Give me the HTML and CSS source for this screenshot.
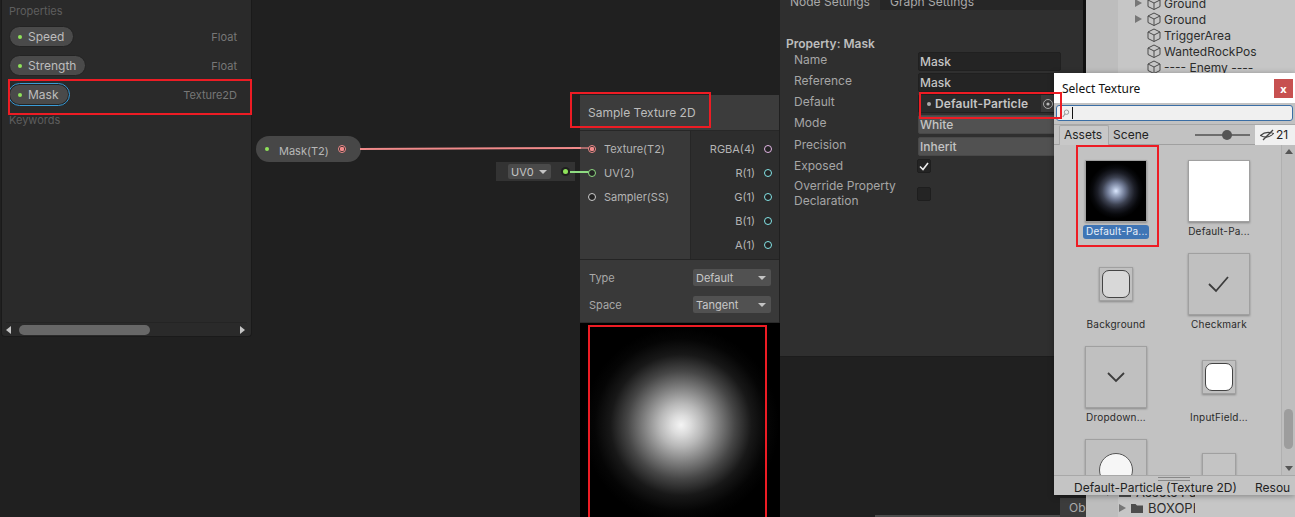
FILE: index.html
```html
<!DOCTYPE html>
<html lang="en">
<head>
    <meta charset="UTF-8">
    <title>Shader Graph - Select Texture</title>
    <link rel="stylesheet" href="styles.css">
</head>
<body>
    <svg width="0" height="0" class="defs">
        <symbol id="cube" viewBox="0 0 14 14">
            <path d="M7 1 L13 4 V10.5 L7 13.5 L1 10.5 V4 Z M1 4 L7 7 L13 4 M7 7 V13.5" fill="none" stroke="#4a4a4a" stroke-width="1"/>
        </symbol>
    </svg>

    <!-- blackboard -->
    <div class="blackboard">
        <div class="bb-title">Properties</div>
        <div class="bb-row"><span class="pill"><i class="dot"></i>Speed</span><span class="bb-type">Float</span></div>
        <div class="bb-row"><span class="pill"><i class="dot"></i>Strength</span><span class="bb-type">Float</span></div>
        <div class="bb-row"><span class="pill pill-selected"><i class="dot"></i>Mask</span><span class="bb-type">Texture2D</span></div>
        <div class="bb-title bb-keywords">Keywords</div>
        <div class="bb-scroll">
            <span class="arrow-left"></span>
            <span class="bb-thumb"></span>
            <span class="arrow-right"></span>
        </div>
    </div>

    <!-- mask property node -->
    <div class="prop-node">
        <i class="dot"></i>
        <span class="prop-label">Mask(T2)</span>
        <i class="port port-tex-on"></i>
    </div>

    <!-- uv input -->
    <div class="uv-input">
        <span class="uv-select">UV0<span class="caret"></span></span>
        <i class="uv-dot"></i>
    </div>

    <!-- sample texture node -->
    <div class="node">
        <div class="node-title">Sample Texture 2D</div>
        <div class="node-ports">
            <div class="ports-in">
                <div class="port-row"><i class="port port-tex-on"></i>Texture(T2)</div>
                <div class="port-row"><i class="port port-uv"></i>UV(2)</div>
                <div class="port-row"><i class="port port-ss"></i>Sampler(SS)</div>
            </div>
            <div class="ports-out">
                <div class="port-row">RGBA(4)<i class="port port-rgba"></i></div>
                <div class="port-row">R(1)<i class="port port-float"></i></div>
                <div class="port-row">G(1)<i class="port port-float"></i></div>
                <div class="port-row">B(1)<i class="port port-float"></i></div>
                <div class="port-row">A(1)<i class="port port-float"></i></div>
            </div>
        </div>
        <div class="node-controls">
            <div class="control-row"><span>Type</span><span class="node-select">Default<span class="caret"></span></span></div>
            <div class="control-row"><span>Space</span><span class="node-select">Tangent<span class="caret"></span></span></div>
        </div>
        <div class="node-preview"><div class="preview-glow"></div></div>
    </div>

    <!-- wires -->
    <svg class="wires" width="1295" height="517">
        <line x1="360" y1="149" x2="581" y2="148" stroke="#f08a8a" stroke-width="2"/>
        <line x1="581" y1="148" x2="589" y2="148" stroke="#a86a6a" stroke-width="2"/>
        <line x1="570" y1="172" x2="589" y2="172" stroke="#8fdc82" stroke-width="2"/>
    </svg>

    <!-- graph inspector -->
    <div class="inspector">
        <div class="tabs">
            <span class="tab tab-active">Node Settings</span>
            <span class="tab">Graph Settings</span>
        </div>
        <div class="insp-heading">Property: Mask</div>
        <div class="insp-row"><label>Name</label><span class="field">Mask</span></div>
        <div class="insp-row"><label>Reference</label><span class="field">Mask</span></div>
        <div class="insp-row"><label>Default</label>
            <span class="field field-object"><i class="tex-dot"></i>Default-Particle
                <span class="object-btn"><svg width="14" height="14" viewBox="0 0 14 14"><circle cx="7" cy="7" r="4.5" fill="none" stroke="#aaa" stroke-width="1"/><circle cx="7" cy="7" r="1.6" fill="#bbb"/></svg></span>
            </span>
        </div>
        <div class="insp-row"><label>Mode</label><span class="field field-select">White</span></div>
        <div class="insp-row insp-row-precision"><label>Precision</label><span class="field field-select">Inherit</span></div>
        <div class="insp-row insp-row-exposed"><label>Exposed</label>
            <span class="check"><svg width="12" height="12" viewBox="0 0 12 12"><path d="M2 6.5 L5 9.5 L10 3" fill="none" stroke="#eee" stroke-width="1.6"/></svg></span>
        </div>
        <div class="insp-row insp-row-tall"><label>Override Property<br>Declaration</label><span class="check"></span></div>
    </div>

    <!-- hierarchy behind the picker -->
    <div class="hierarchy">
        <div class="tree-row"><span class="tree-arrow"></span><svg class="cube"><use href="#cube"/></svg>Ground</div>
        <div class="tree-row"><span class="tree-arrow"></span><svg class="cube"><use href="#cube"/></svg>Ground</div>
        <div class="tree-row"><span class="tree-arrow tree-none"></span><svg class="cube"><use href="#cube"/></svg>TriggerArea</div>
        <div class="tree-row"><span class="tree-arrow tree-none"></span><svg class="cube"><use href="#cube"/></svg>WantedRockPos</div>
        <div class="tree-row"><span class="tree-arrow tree-none"></span><svg class="cube"><use href="#cube"/></svg>---- Enemy ----</div>
    </div>
    <div class="console-tab">Ob</div>
    <div class="project-tree">
        <div class="project-row project-row-root">
            <span class="tree-arrow"></span>
            <svg class="folder" width="12" height="10" viewBox="0 0 12 10"><path d="M0 1 H4.5 L6 2.5 H12 V10 H0 Z" fill="#4d4d4d"/></svg>
            <span>Assets Pac</span>
        </div>
        <div class="project-row">
            <span class="tree-arrow"></span>
            <svg class="folder" width="12" height="10" viewBox="0 0 12 10"><path d="M0 1 H4.5 L6 2.5 H12 V10 H0 Z" fill="#4d4d4d"/></svg>
            <span>BOXOPH</span>
        </div>
    </div>
    <div class="bottom-line"></div>

    <!-- select texture window -->
    <div class="picker">
        <div class="picker-title">
            <span>Select Texture</span>
            <span class="picker-close">x</span>
        </div>
        <div class="picker-search">
            <div class="search-field">
                <svg width="8" height="9" viewBox="0 0 8 9"><circle cx="4.5" cy="3.2" r="2.2" fill="none" stroke="#999" stroke-width="1"/><line x1="3" y1="5" x2="0.8" y2="8" stroke="#999" stroke-width="1.2"/></svg>
                <span class="search-cursor"></span>
            </div>
        </div>
        <div class="picker-tabs">
            <span class="picker-tab picker-tab-active">Assets</span>
            <span class="picker-tab">Scene</span>
            <span class="size-slider"><i class="size-knob"></i></span>
            <span class="hidden-count">
                <svg width="14" height="12" viewBox="0 0 14 12"><path d="M0.5 6.5 Q6 1.5 13.5 4.5 Q8 10.5 0.5 6.5 Z" fill="none" stroke="#444" stroke-width="1.1"/><path d="M3 11 L13 1" fill="none" stroke="#444" stroke-width="1.3"/></svg>21
            </span>
        </div>
        <div class="picker-body">
            <div class="picker-grid">
                <div class="asset">
                    <div class="thumb thumb-glow"></div>
                    <div class="asset-name asset-selected">Default-Pa...</div>
                </div>
                <div class="asset">
                    <div class="thumb thumb-white"></div>
                    <div class="asset-name">Default-Pa...</div>
                </div>
                <div class="asset">
                    <div class="thumb thumb-small"><span class="small-inner"></span></div>
                    <div class="asset-name">Background</div>
                </div>
                <div class="asset">
                    <div class="thumb thumb-plain"><svg width="22" height="18" viewBox="0 0 22 18"><path d="M1 9 L8 16 L20 2" fill="none" stroke="#3c3c3c" stroke-width="1.8"/></svg></div>
                    <div class="asset-name">Checkmark</div>
                </div>
                <div class="asset">
                    <div class="thumb thumb-plain"><svg width="18" height="11" viewBox="0 0 18 11"><path d="M1 1 L9 9 L17 1" fill="none" stroke="#3c3c3c" stroke-width="1.8"/></svg></div>
                    <div class="asset-name">Dropdown...</div>
                </div>
                <div class="asset">
                    <div class="thumb thumb-small"><span class="small-inner small-white"></span></div>
                    <div class="asset-name">InputField...</div>
                </div>
                <div class="asset">
                    <div class="thumb thumb-plain"><span class="knob-circle"></span></div>
                </div>
                <div class="asset">
                    <div class="thumb thumb-small thumb-faint"></div>
                </div>
            </div>
            <div class="picker-scrollbar">
                <span class="sb-up"></span>
                <span class="sb-thumb"></span>
                <span class="sb-down"></span>
            </div>
        </div>
        <div class="picker-footer">
            <span class="footer-grip"></span>
            <span class="footer-name">Default-Particle (Texture 2D)</span>
            <span class="footer-res">Resou</span>
        </div>
    </div>

    <!-- red annotation boxes -->
    <div class="mark mark-row"></div>
    <div class="mark mark-title"></div>
    <div class="mark mark-preview"></div>
    <div class="mark mark-default"></div>
    <div class="mark mark-asset"></div>
</body>
</html>
```

FILE: styles.css
```css
html, body {
    margin: 0;
    height: 100%;
}
body {
    position: relative;
    width: 1295px;
    height: 517px;
    overflow: hidden;
    background: #202020;
    font-family: Inter, "Noto Sans", sans-serif;
    font-size: 12px;
    color: #c4c4c4;
}
.defs {
    position: absolute;
}
i {
    display: block;
    flex: none;
}

/* blackboard */
.blackboard {
    position: absolute;
    left: 1px;
    top: 0;
    width: 251px;
    height: 337px;
    box-sizing: border-box;
    padding: 4px 14px 0 7px;
    background: #2a2a2a;
    border: 1px solid #1a1a1a;
    border-top: none;
    border-radius: 0 0 4px 4px;
}
.bb-title {
    font-size: 11px;
    line-height: 14px;
    color: #5e5e5e;
    margin-bottom: 8px;
}
.bb-keywords {
    margin-top: 6px;
}
.bb-row {
    display: flex;
    justify-content: space-between;
    align-items: center;
    height: 21px;
    margin-bottom: 8px;
}
.bb-type {
    font-size: 11px;
    color: #777;
}
.pill {
    display: flex;
    align-items: center;
    height: 21px;
    box-sizing: border-box;
    padding: 0 9px 0 8px;
    background: #4a4a4a;
    border: 1px solid #232323;
    border-radius: 11px;
    color: #bdbdbd;
}
.pill .dot {
    margin-right: 6px;
}
.pill-selected {
    outline: 1px solid #3a9cd8;
    outline-offset: 0;
    border-radius: 11px;
    box-shadow: 0 0 0 1px #1f1f1f;
}
.dot {
    width: 4px;
    height: 4px;
    border-radius: 50%;
    background: #8fe35a;
}
.bb-scroll {
    position: absolute;
    left: 4px;
    right: 4px;
    bottom: 0;
    height: 13px;
    display: flex;
    align-items: center;
    border-top: 1px solid #242424;
}
.bb-thumb {
    width: 131px;
    height: 10px;
    margin-left: 8px;
    border-radius: 5px;
    background: #676767;
}
.arrow-left {
    border: 4px solid transparent;
    border-right: 5px solid #c4c4c4;
    border-left: none;
}
.arrow-right {
    margin-left: auto;
    margin-right: 2px;
    border: 4px solid transparent;
    border-left: 5px solid #c4c4c4;
    border-right: none;
}

/* wires */
.wires {
    position: absolute;
    left: 0;
    top: 0;
}

/* nodes */
.prop-node {
    position: absolute;
    left: 256px;
    top: 136px;
    width: 105px;
    height: 26px;
    box-sizing: border-box;
    display: flex;
    align-items: center;
    padding: 0 15px 0 9px;
    background: #474747;
    border-radius: 13px;
    font-size: 11px;
}
.prop-label {
    margin-left: 10px;
    margin-top: 4px;
    color: #b8b8b8;
}
.prop-node .port {
    margin-left: auto;
}
.port {
    position: relative;
    z-index: 1;
    width: 8px;
    height: 8px;
    box-sizing: border-box;
    border-radius: 50%;
    background: #232323;
    border: 1px solid #ccc;
}
.port-tex-on {
    border-color: #f08a8a;
    background: radial-gradient(circle, #f08a8a 0 2px, #2c2c2c 2.4px);
}
.port-uv {
    border-color: #8fdc82;
}
.port-rgba {
    border-color: #e3b6e6;
}
.port-float {
    border-color: #84e4e7;
}
.uv-input {
    position: absolute;
    left: 496px;
    top: 162px;
    width: 79px;
    height: 19px;
    display: flex;
    align-items: center;
    background: #333;
    font-size: 11px;
}
.uv-select {
    display: flex;
    align-items: center;
    width: 43px;
    height: 15px;
    box-sizing: border-box;
    margin-left: 12px;
    padding-left: 3px;
    background: #4a4a4a;
    border-radius: 2px;
    color: #c4c4c4;
}
.uv-select .caret {
    margin-left: 5px;
}
.uv-dot {
    width: 5px;
    height: 5px;
    margin-left: 12px;
    border-radius: 50%;
    background: #8fe35a;
    box-shadow: 0 0 0 2px #1f1f1f;
}
.caret {
    display: block;
    border: 4px solid transparent;
    border-top: 4px solid #c4c4c4;
    border-bottom: none;
}
.node {
    position: absolute;
    left: 580px;
    top: 95px;
    width: 199px;
    height: 430px;
    display: flex;
    flex-direction: column;
    background: #393939;
}
.node-title {
    height: 36px;
    box-sizing: border-box;
    padding: 10px 0 0 8px;
    font-size: 12px;
    line-height: 16px;
    background: #3c3c3c;
    border-bottom: 1px solid #272727;
    color: #bcbcbc;
}
.node-ports {
    display: flex;
    height: 129px;
    border-bottom: 1px solid #242424;
    box-sizing: border-box;
    font-size: 11px;
}
.ports-in {
    width: 111px;
    box-sizing: border-box;
    padding: 6px 0 0 8px;
    border-right: 1px solid #262626;
}
.ports-out {
    flex: 1;
    padding: 6px 7px 0 0;
    background: #2d2d2d;
}
.port-row {
    display: flex;
    align-items: center;
    height: 24px;
    color: #b4b4b4;
}
.ports-in .port {
    margin-right: 8px;
}
.ports-out .port-row {
    justify-content: flex-end;
}
.ports-out .port {
    margin-left: 9px;
}
.node-controls {
    height: 63px;
    box-sizing: border-box;
    padding: 9px 8px 0 9px;
    font-size: 11px;
    border-bottom: 1px solid #2b2b2b;
}
.control-row {
    display: flex;
    justify-content: space-between;
    align-items: center;
    height: 17px;
    margin-bottom: 10px;
    color: #a8a8a8;
}
.node-select {
    display: flex;
    align-items: center;
    justify-content: space-between;
    width: 78px;
    height: 17px;
    box-sizing: border-box;
    padding: 0 5px 0 3px;
    background: #515151;
    border-radius: 2px;
    color: #c8c8c8;
}
.node-preview {
    flex: 1;
    width: 200px;
    background: #000;
}
.preview-glow {
    width: 200px;
    height: 200px;
    background: radial-gradient(circle closest-side at 50.5% 51%, #f4f4f4 0, #dcdcdc 10%, #b8b8b8 22%, #808080 38%, #464646 55%, #181818 72%, #050505 88%, #000 100%);
}

/* inspector */
.inspector {
    position: absolute;
    left: 780px;
    top: 0;
    width: 303px;
    height: 356px;
    background: #2f2f2f;
    border-bottom: 1px solid #1c1c1c;
    border-right: 3px solid #111;
    box-sizing: content-box;
}
.tabs {
    display: flex;
    height: 10px;
    background: #262626;
    overflow: hidden;
}
.tab {
    width: 100px;
    flex: none;
    box-sizing: border-box;
    padding-left: 10px;
    line-height: 4px;
    white-space: nowrap;
    color: #aaa;
}
.tab-active {
    background: #2f2f2f;
}
.insp-heading {
    margin: 26px 0 0 6px;
    font-weight: 600;
    line-height: 15px;
    color: #bdbdbd;
}
.insp-row {
    display: flex;
    align-items: center;
    height: 21px;
    padding-left: 14px;
}
.insp-row label {
    flex: none;
    width: 123px;
    margin-bottom: 4px;
    line-height: 15px;
    color: #a6a6a6;
}
.insp-row-precision {
    margin-top: 1px;
}
.insp-row-exposed {
    margin-top: -2px;
}
.insp-row-exposed label {
    margin-bottom: 0;
}
.insp-row-tall {
    height: 29px;
    margin-top: 3px;
}
.insp-row-tall label {
    margin-bottom: 1px;
}
.field {
    display: flex;
    align-items: center;
    width: 143px;
    height: 19px;
    box-sizing: border-box;
    padding-left: 1px;
    margin-left: 1px;
    background: #242424;
    border: 1px solid #202020;
    border-radius: 2px;
    font-weight: 500;
    color: #c4c4c4;
}
.field-object {
    padding-left: 8px;
    font-weight: 600;
    letter-spacing: 0.1px;
    background: #2a2a2a;
}
.tex-dot {
    width: 4px;
    height: 4px;
    margin-right: 4px;
    border-radius: 50%;
    background: #aaa;
}
.object-btn {
    display: flex;
    align-items: center;
    justify-content: center;
    width: 14px;
    height: 17px;
    margin-left: auto;
    margin-right: 5px;
    background: #3a3a3a;
}
.field-select {
    background: #515151;
    border-color: #484848;
}
.check {
    display: flex;
    align-items: center;
    justify-content: center;
    width: 14px;
    height: 14px;
    background: #242424;
    border: 1px solid #1e1e1e;
    border-radius: 2px;
    box-sizing: border-box;
}

/* hierarchy */
.hierarchy {
    position: absolute;
    left: 1086px;
    top: 0;
    right: 0;
    bottom: 0;
    box-sizing: border-box;
    padding: 0 0 0 49px;
    background: linear-gradient(to right, #bdbdbd 32px, #c6c6c6 32px);
    color: #2c2c2c;
}
.tree-row {
    display: flex;
    align-items: center;
    height: 16px;
    position: relative;
    top: -5px;
}
.tree-arrow {
    display: block;
    flex: none;
    border: 4px solid transparent;
    border-left: 7px solid #777;
    border-right: none;
}
.tree-none {
    visibility: hidden;
}
.cube {
    width: 14px;
    height: 14px;
    margin: 0 3px 0 5px;
    flex: none;
}
.console-tab {
    position: absolute;
    left: 1060px;
    top: 498px;
    width: 26px;
    height: 19px;
    box-sizing: border-box;
    padding: 2px 0 0 9px;
    background: #3c3c3c;
    color: #aaa;
}
.project-tree {
    position: absolute;
    left: 1086px;
    top: 495px;
    width: 109px;
    height: 22px;
    overflow: hidden;
    color: #2c2c2c;
    font-size: 13px;
}
.project-row {
    display: flex;
    align-items: center;
    gap: 5px;
    height: 16px;
    padding-left: 33px;
    white-space: nowrap;
}
.folder {
    flex: none;
}
.project-row-root {
    margin-top: -11px;
    padding-left: 21px;
}
.bottom-line {
    position: absolute;
    left: 875px;
    top: 515px;
    width: 185px;
    height: 2px;
    background: #4c4c4c;
}

/* select texture window */
.picker {
    position: absolute;
    left: 1054px;
    top: 73px;
    width: 241px;
    height: 422px;
    display: flex;
    flex-direction: column;
    background: #c2c2c2;
    box-shadow: 0 1px 6px rgba(0,0,0,0.35);
}
.picker-title {
    display: flex;
    align-items: center;
    justify-content: space-between;
    height: 30px;
    flex: none;
    box-sizing: border-box;
    padding: 0 2px 0 8px;
    background: #fff;
    color: #111;
    font-family: "Noto Sans", sans-serif;
    font-size: 12px;
}
.picker-close {
    display: flex;
    align-items: center;
    justify-content: center;
    width: 19px;
    height: 19px;
    background: #c75050;
    color: #fff;
    font-weight: 700;
    font-size: 11px;
}
.picker-search {
    height: 21px;
    flex: none;
    box-sizing: border-box;
    padding: 2px 2px 0;
}
.search-field {
    display: flex;
    align-items: center;
    height: 16px;
    box-sizing: border-box;
    padding-left: 5px;
    background: #f0f0f0;
    border: 1px solid #3a6ea5;
    border-radius: 3px;
}
.search-cursor {
    width: 1px;
    height: 12px;
    margin-left: 2px;
    background: #111;
}
.picker-tabs {
    display: flex;
    align-items: center;
    height: 21px;
    flex: none;
    box-sizing: border-box;
    padding-left: 5px;
    border-top: 1px solid #a8a8a8;
    border-bottom: 1px solid #a0a0a0;
    color: #222;
}
.picker-tab {
    display: flex;
    align-items: center;
    height: 20px;
    padding: 0 6px 1px 4px;
    box-sizing: border-box;
}
.picker-tab-active {
    background: #c8c8c8;
    border: 1px solid #a8a8a8;
    border-bottom: none;
    border-radius: 2px 2px 0 0;
}
.size-slider {
    position: relative;
    width: 55px;
    height: 2px;
    margin-left: 40px;
    background: #6d6d6d;
}
.size-knob {
    position: absolute;
    left: 27px;
    top: -4px;
    width: 10px;
    height: 10px;
    border-radius: 50%;
    background: #555;
}
.hidden-count {
    display: flex;
    align-items: center;
    gap: 2px;
    height: 20px;
    width: 40px;
    box-sizing: border-box;
    margin-left: auto;
    padding-left: 5px;
    background: #f0f0f0;
}
.picker-body {
    position: relative;
    flex: 1;
    overflow: hidden;
    display: flex;
}
.picker-grid {
    width: 227px;
    flex: none;
    box-sizing: border-box;
    padding: 15px 0 0 14px;
    display: grid;
    grid-template-columns: 103px 62px;
    grid-auto-rows: 93px;
    justify-content: start;
}
.asset {
    display: flex;
    flex-direction: column;
    align-items: center;
    width: 62px;
    position: relative;
    left: 17px;
}
.thumb {
    width: 62px;
    height: 62px;
    flex: none;
    box-sizing: border-box;
    display: flex;
    align-items: center;
    justify-content: center;
    background: #c0c0c0;
    border: 1px solid #a0a0a0;
    box-shadow: 0 1px 2px rgba(0,0,0,0.3);
}
.thumb-glow {
    background: #000 radial-gradient(circle closest-side, #dce8ff 0, #a9b6d0 12%, #6c7690 30%, #3c4150 46%, #1c1e27 62%, #08090c 78%, #000 92%);
}
.thumb-white {
    background: #fff;
}
.thumb-small {
    width: 34px;
    height: 34px;
    margin: 14px 0;
}
.small-inner {
    display: block;
    width: 28px;
    height: 28px;
    box-sizing: border-box;
    border: 1px solid #444;
    border-radius: 7px;
    background: #d8d8d8;
}
.small-white {
    background: #fff;
}
.thumb-faint {
    background: #c4c4c4;
}
.knob-circle {
    display: block;
    width: 34px;
    height: 34px;
    box-sizing: border-box;
    border: 1px solid #555;
    border-radius: 50%;
    background: #f6f6f6;
}
.asset-name {
    margin-top: 3px;
    padding: 0 3px;
    height: 14px;
    font-size: 10px;
    line-height: 13px;
    letter-spacing: 0.2px;
    white-space: nowrap;
    color: #2a2a2a;
}
.asset-selected {
    width: 66px;
    box-sizing: border-box;
    text-align: center;
    border-radius: 3px;
    background: #3f75b5;
    color: #e8f0fa;
}
.picker-scrollbar {
    flex: 1;
    position: relative;
    border-left: 1px solid #b0b0b0;
    background: #bebebe;
}
.sb-up, .sb-down {
    position: absolute;
    left: 3px;
    border: 4px solid transparent;
}
.sb-up {
    top: 4px;
    border-bottom: 5px solid #555;
    border-top: none;
}
.sb-down {
    bottom: 4px;
    border-top: 5px solid #555;
    border-bottom: none;
}
.sb-thumb {
    position: absolute;
    left: 2px;
    top: 264px;
    width: 9px;
    height: 40px;
    border-radius: 5px;
    background: #9d9d9d;
}
.picker-footer {
    position: relative;
    height: 20px;
    flex: none;
    display: flex;
    align-items: center;
    padding-top: 3px;
    background: #c4c4c4;
    border-top: 1px solid #a8a8a8;
    box-sizing: border-box;
    color: #222;
}
.footer-grip {
    position: absolute;
    left: 104px;
    top: 1px;
    width: 32px;
    height: 2px;
    border-top: 1px solid #888;
    border-bottom: 1px solid #888;
}
.footer-name {
    margin-left: 20px;
    white-space: nowrap;
}
.footer-res {
    position: absolute;
    left: 201px;
}

/* red annotation boxes */
.mark {
    position: absolute;
    box-sizing: border-box;
    border: 2px solid #ed1c24;
}
.mark-row {
    left: 8px;
    top: 79px;
    width: 244px;
    height: 36px;
}
.mark-title {
    left: 570px;
    top: 92px;
    width: 141px;
    height: 36px;
}
.mark-preview {
    left: 588px;
    top: 325px;
    width: 179px;
    height: 200px;
}
.mark-default {
    left: 919px;
    top: 92px;
    width: 143px;
    height: 27px;
}
.mark-asset {
    left: 1076px;
    top: 145px;
    width: 83px;
    height: 102px;
}
```
